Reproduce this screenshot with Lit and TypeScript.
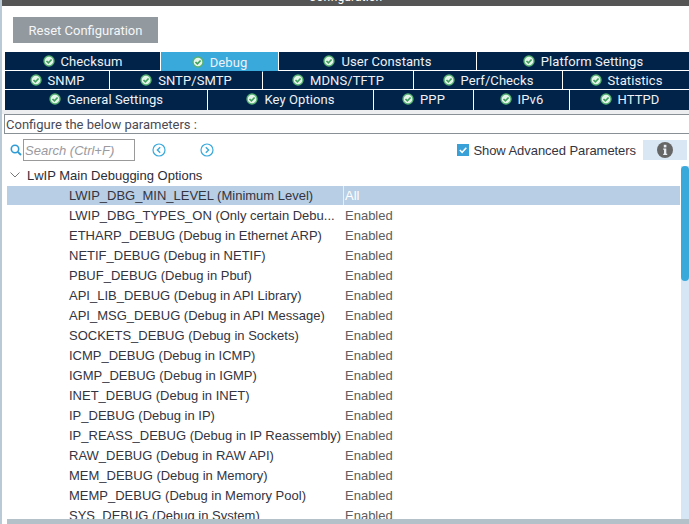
import { LitElement, html, css, svg } from "lit";
import { customElement } from "lit/decorators.js";

const tabRows: { label: string; w: number; active?: boolean }[][] = [
  [
    { label: "Checksum", w: 155 },
    { label: "Debug", w: 117, active: true },
    { label: "User Constants", w: 197 },
    { label: "Platform Settings", w: 212 },
  ],
  [
    { label: "SNMP", w: 104 },
    { label: "SNTP/SMTP", w: 152 },
    { label: "MDNS/TFTP", w: 150 },
    { label: "Perf/Checks", w: 148 },
    { label: "Statistics", w: 126 },
  ],
  [
    { label: "General Settings", w: 202 },
    { label: "Key Options", w: 165 },
    { label: "PPP", w: 99 },
    { label: "IPv6", w: 95 },
    { label: "HTTPD", w: 119 },
  ],
];

const params: [string, string][] = [
  ["LWIP_DBG_MIN_LEVEL (Minimum Level)", "All"],
  ["LWIP_DBG_TYPES_ON (Only certain Debu...", "Enabled"],
  ["ETHARP_DEBUG (Debug in Ethernet ARP)", "Enabled"],
  ["NETIF_DEBUG (Debug in NETIF)", "Enabled"],
  ["PBUF_DEBUG (Debug in Pbuf)", "Enabled"],
  ["API_LIB_DEBUG (Debug in API Library)", "Enabled"],
  ["API_MSG_DEBUG (Debug in API Message)", "Enabled"],
  ["SOCKETS_DEBUG (Debug in Sockets)", "Enabled"],
  ["ICMP_DEBUG (Debug in ICMP)", "Enabled"],
  ["IGMP_DEBUG (Debug in IGMP)", "Enabled"],
  ["INET_DEBUG (Debug in INET)", "Enabled"],
  ["IP_DEBUG (Debug in IP)", "Enabled"],
  ["IP_REASS_DEBUG (Debug in IP Reassembly)", "Enabled"],
  ["RAW_DEBUG (Debug in RAW API)", "Enabled"],
  ["MEM_DEBUG (Debug in Memory)", "Enabled"],
  ["MEMP_DEBUG (Debug in Memory Pool)", "Enabled"],
  ["SYS_DEBUG (Debug in System)", "Enabled"],
];

const okIcon = svg`<svg class="ok" viewBox="0 0 12 12" width="12" height="12">
  <circle cx="6" cy="6" r="5.7" fill="#56b273"/>
  <circle cx="6" cy="6" r="4.3" fill="#e4f5e9"/>
  <path d="M3.5 6 5.4 7.8 8.6 4.5" fill="none" stroke="#3f9f5c" stroke-width="1.7"/>
</svg>`;

@customElement("app-root")
export class AppRoot extends LitElement {
  static styles = css`
    :host {
      display: block;
      width: 689px;
      height: 524px;
      overflow: hidden;
      background: #fff;
      font-family: "Liberation Sans", Arial, sans-serif;
      font-size: 13px;
      color: #343440;
    }
    .frame {
      display: flex;
      height: 524px;
    }
    .edge {
      width: 2px;
      flex: none;
      background: #b9c9d6;
    }
    .main {
      flex: 1;
      min-width: 0;
      display: flex;
      flex-direction: column;
    }
    .title {
      height: 6px;
      flex: none;
      background: #555;
      color: #fff;
      overflow: hidden;
      text-align: center;
      line-height: 0;
      font-family: Roboto, sans-serif;
      font-size: 12px;
      letter-spacing: 0.1px;
    }
    .title span {
      display: block;
      height: 0;
      transform: translateY(-3px);
    }
    .btn {
      flex: none;
      width: 145px;
      height: 26px;
      margin: 11px 0 9px 11px;
      background: #92999f;
      color: #f5f6f7;
      display: flex;
      align-items: center;
      justify-content: center;
      font-family: Roboto, sans-serif;
    }
    .tabs {
      flex: none;
      margin-left: 3px;
      display: flex;
      flex-direction: column;
      gap: 1px;
    }
    .row {
      display: flex;
      gap: 1px;
      height: 18px;
    }
    .row.tall {
      height: 20px;
    }
    .row.tall .tab {
      box-sizing: border-box;
      padding-bottom: 2px;
    }
    .tab {
      flex: none;
      background: #012249;
      color: #eef2f6;
      display: flex;
      align-items: center;
      justify-content: center;
      gap: 6px;
      font-family: Roboto, sans-serif;
      letter-spacing: 0.08px;
    }
    .tab.active {
      background: #39a9dc;
      height: 20px;
    }
    .ok {
      flex: none;
    }
    .strip {
      flex: none;
      height: 4px;
      background: #eceef0;
    }
    .rule {
      flex: none;
      height: 18px;
      border: 1px solid #8a9196;
      border-right: 0;
      margin-left: 2px;
      background: #fff;
      line-height: 19px;
      padding-left: 1px;
      font-family: Roboto, sans-serif;
      color: #4a4a55;
    }
    .tools {
      flex: none;
      height: 22px;
      margin-top: 5px;
      display: flex;
      align-items: center;
    }
    .search-ic {
      margin-left: 8px;
      flex: none;
    }
    .search {
      margin-left: 1px;
      width: 109px;
      height: 20px;
      flex: none;
      border: 1px solid #9a9a9a;
      color: #9a9a9f;
      font-style: italic;
      line-height: 21px;
      padding-left: 1px;
    }
    .nav {
      flex: none;
      margin-left: 17px;
    }
    .nav + .nav {
      margin-left: 34px;
    }
    .spacer {
      flex: 1;
    }
    .check {
      flex: none;
      width: 12px;
      height: 12px;
      margin-right: 4px;
    }
    .adv {
      flex: none;
      letter-spacing: -0.06px;
    }
    .info {
      flex: none;
      width: 44px;
      height: 20px;
      margin: 0 2px 0 7px;
      background: #d9e7f5;
      display: flex;
      align-items: center;
      justify-content: center;
    }
    .body {
      flex: 1;
      min-height: 0;
      display: flex;
      margin-top: 5px;
      margin-left: 5px;
    }
    .content {
      flex: 1;
      min-width: 0;
      overflow: hidden;
    }
    .group {
      height: 20px;
      margin-top: -1px;
      margin-bottom: 1px;
      display: flex;
      align-items: center;
      gap: 7px;
      padding-left: 3px;
      color: #2d2d38;
    }
    .item {
      height: 20px;
      display: grid;
      grid-template-columns: 336px 1fr;
      align-items: center;
      white-space: nowrap;
      margin-right: 1px;
    }
    .item .name {
      padding-left: 62px;
    }
    .item .val {
      padding-left: 2px;
      color: #5d5d5d;
    }
    .item.sel {
      background: #b8cee4;
      height: 19px;
    }
    .item.sel .val {
      color: #fff;
      border-left: 1px solid #e6eef6;
      padding-left: 1px;
      line-height: 19px;
    }
    .bar {
      flex: none;
      width: 8px;
      background: #d7e6f4;
    }
    .thumb {
      height: 115px;
      background: #39a9dc;
      border-radius: 4px;
    }
    .hbar {
      flex: none;
      height: 5px;
      margin-left: 5px;
      background: #b4c1c8;
    }
  `;

  render() {
    return html`
      <div class="frame">
        <div class="edge"></div>
        <div class="main">
          <div class="title"><span>Configuration</span></div>
          <div class="btn">Reset Configuration</div>
          <div class="tabs">
            ${tabRows.map(
              (r, i) => html`<div class="row ${i === 2 ? "tall" : ""}">
                ${r.map(
                  (t) => html`<div
                    class="tab ${t.active ? "active" : ""}"
                    style="width:${t.w}px"
                  >
                    ${okIcon}<span>${t.label}</span>
                  </div>`
                )}
              </div>`
            )}
          </div>
          <div class="strip"></div>
          <div class="rule">Configure the below parameters :</div>
          <div class="tools">
            <svg class="search-ic" width="12" height="12" viewBox="0 0 12 12">
              <circle cx="5" cy="5" r="3.7" fill="none" stroke="#2f9bd6" stroke-width="1.6"/>
              <path d="M7.8 7.8 11 11" stroke="#2f9bd6" stroke-width="1.8"/>
            </svg>
            <div class="search">Search (Ctrl+F)</div>
            <svg class="nav" width="14" height="14" viewBox="0 0 14 14">
              <circle cx="7" cy="7" r="6" fill="none" stroke="#39a9dc" stroke-width="1.2"/>
              <path d="M8.2 4.3 5.4 7 8.2 9.7" fill="none" stroke="#39a9dc" stroke-width="1.4"/>
            </svg>
            <svg class="nav" width="14" height="14" viewBox="0 0 14 14">
              <circle cx="7" cy="7" r="6" fill="none" stroke="#39a9dc" stroke-width="1.2"/>
              <path d="M5.8 4.3 8.6 7 5.8 9.7" fill="none" stroke="#39a9dc" stroke-width="1.4"/>
            </svg>
            <div class="spacer"></div>
            <svg class="check" viewBox="0 0 12 12">
              <rect width="12" height="12" fill="#39a0d8"/>
              <path d="M2.8 6 5.1 8.3 9.3 3.8" fill="none" stroke="#fff" stroke-width="1.5"/>
            </svg>
            <div class="adv">Show Advanced Parameters</div>
            <div class="info">
              <svg width="16" height="16" viewBox="0 0 16 16">
                <circle cx="8" cy="8" r="8" fill="#666"/>
                <rect x="6.8" y="2.8" width="2.6" height="2.6" fill="#e8eef4"/>
                <path d="M6.2 6.6H9.3V11.8H10.2V13H6.2V11.8H7V7.8H6.2Z" fill="#e8eef4"/>
              </svg>
            </div>
          </div>
          <div class="body">
            <div class="content">
              <div class="group">
                <svg width="10" height="6" viewBox="0 0 10 6">
                  <path d="M.5 .5 5 5 9.5 .5" fill="none" stroke="#777" stroke-width="1"/>
                </svg>
                <span>LwIP Main Debugging Options</span>
              </div>
              ${params.map(
                ([n, v], i) => html`<div class="item ${i === 0 ? "sel" : ""}">
                  <span class="name">${n}</span><span class="val">${v}</span>
                </div>`
              )}
            </div>
            <div class="bar"><div class="thumb"></div></div>
          </div>
          <div class="hbar"></div>
        </div>
      </div>
    `;
  }
}
